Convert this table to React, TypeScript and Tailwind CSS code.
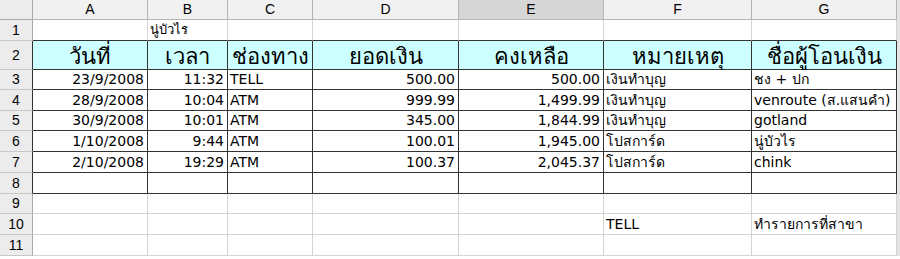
import React from 'react'

const cols = ['A', 'B', 'C', 'D', 'E', 'F', 'G']

type Cell = { text?: string; align?: 'l' | 'r' | 'c' }

const rows: Cell[][] = [
  [{}, { text: 'นู่บัวไร' }, {}, {}, {}, {}, {}],
  [
    { text: 'วันที่', align: 'c' },
    { text: 'เวลา', align: 'c' },
    { text: 'ช่องทาง', align: 'c' },
    { text: 'ยอดเงิน', align: 'c' },
    { text: 'คงเหลือ', align: 'c' },
    { text: 'หมายเหตุ', align: 'c' },
    { text: 'ชื่อผู้โอนเงิน', align: 'c' },
  ],
  [
    { text: '23/9/2008', align: 'r' },
    { text: '11:32', align: 'r' },
    { text: 'TELL' },
    { text: '500.00', align: 'r' },
    { text: '500.00', align: 'r' },
    { text: 'เงินทำบุญ' },
    { text: 'ชง + ปก' },
  ],
  [
    { text: '28/9/2008', align: 'r' },
    { text: '10:04', align: 'r' },
    { text: 'ATM' },
    { text: '999.99', align: 'r' },
    { text: '1,499.99', align: 'r' },
    { text: 'เงินทำบุญ' },
    { text: 'venroute (ส.แสนคำ)' },
  ],
  [
    { text: '30/9/2008', align: 'r' },
    { text: '10:01', align: 'r' },
    { text: 'ATM' },
    { text: '345.00', align: 'r' },
    { text: '1,844.99', align: 'r' },
    { text: 'เงินทำบุญ' },
    { text: 'gotland' },
  ],
  [
    { text: '1/10/2008', align: 'r' },
    { text: '9:44', align: 'r' },
    { text: 'ATM' },
    { text: '100.01', align: 'r' },
    { text: '1,945.00', align: 'r' },
    { text: 'โปสการ์ด' },
    { text: 'นู่บัวไร' },
  ],
  [
    { text: '2/10/2008', align: 'r' },
    { text: '19:29', align: 'r' },
    { text: 'ATM' },
    { text: '100.37', align: 'r' },
    { text: '2,045.37', align: 'r' },
    { text: 'โปสการ์ด' },
    { text: 'chink' },
  ],
  [{}, {}, {}, {}, {}, {}, {}],
  [{}, {}, {}, {}, {}, {}, {}],
  [{}, {}, {}, {}, {}, { text: 'TELL' }, { text: 'ทำรายการที่สาขา' }],
  [{}, {}, {}, {}, {}, {}, {}],
]

const heights = ['h-[21px]', 'h-[29px]', 'h-[20px]', 'h-[21px]', 'h-[20px]', 'h-[21px]', 'h-[21px]', 'h-[21px]', 'h-[20px]', 'h-[21px]', 'h-[21px]']

export default function App() {
  return (
    <div className="w-[900px] h-[259px] overflow-hidden bg-white font-['Tahoma','DejaVu_Sans',sans-serif] text-[14px] text-black">
      <div className="grid grid-cols-[33px_115px_80px_85px_146px_145px_148px_145px_3px]">
        {/* column headers */}
        <div className="h-[20px] bg-[#ececec] border-r border-b border-[#a9a9a9]" />
        {cols.map((c) => (
          <div
            key={c}
            className={`h-[20px] flex items-center justify-center border-r border-b border-[#b4b4b4] font-['Liberation_Sans',Arial,sans-serif] text-[14px] ${c === 'E' ? 'bg-[#d6d6d6]' : 'bg-[#f1f1f1]'}`}
          >
            {c}
          </div>
        ))}
        <div className="h-[20px] bg-[#e4e4e4]" />

        {rows.map((row, r) => {
          const n = r + 1
          const inBox = n >= 2 && n <= 8
          return (
            <React.Fragment key={n}>
              <div
                className={`${heights[r]} flex items-center justify-center bg-[#ececec] border-b border-[#c8c8c8] font-['Liberation_Sans',Arial,sans-serif] text-[14px] border-r ${inBox ? 'border-r-[#333]' : 'border-r-[#a9a9a9]'}`}
              >
                {n}
              </div>
              {row.map((cell, i) => {
                const bottomDark = n >= 1 && n <= 8
                const rightDark = inBox
                const header = n === 2
                return (
                  <div
                    key={i}
                    className={`${heights[r]} flex items-center overflow-visible whitespace-nowrap border-r border-b ${rightDark ? 'border-r-[#333]' : 'border-r-[#d4d4d4]'} ${bottomDark ? 'border-b-[#333]' : 'border-b-[#d4d4d4]'} ${header ? 'bg-[#ccffff] text-[22px] pt-[2px]' : ''} ${cell.align === 'r' ? 'justify-end pr-[3px]' : cell.align === 'c' ? 'justify-center' : 'justify-start pl-[2px]'} ${n === 1 ? 'text-[13px]' : ''}`}
                  >
                    {cell.text}
                  </div>
                )
              })}
              <div className={`${heights[r]} bg-[#e4e4e4]`} />
            </React.Fragment>
          )
        })}
      </div>
    </div>
  )
}
